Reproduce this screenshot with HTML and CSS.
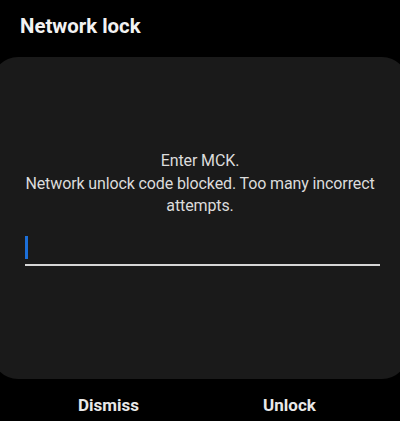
FILE: index.html
```html
<!DOCTYPE html>
<html lang="en">
<head>
<meta charset="utf-8">
<title>Network lock</title>
<link rel="stylesheet" href="styles.css">
</head>
<body>
<div class="screen">
  <header class="header">
    <h1 class="title">Network lock</h1>
  </header>
  <section class="card">
    <p class="message">Enter MCK.<br>Network unlock code blocked. Too many incorrect attempts.</p>
    <div class="field">
      <span class="cursor"></span>
    </div>
  </section>
  <div class="actions">
    <button class="action">Dismiss</button>
    <button class="action">Unlock</button>
  </div>
</div>
</body>
</html>
```

FILE: styles.css
```css
html, body {
  margin: 0;
  padding: 0;
  background: #000;
}
body {
  font-family: Roboto, "Noto Sans", "Liberation Sans", sans-serif;
  overflow: hidden;
}
.screen {
  width: 400px;
  height: 421px;
  overflow: hidden;
  display: flex;
  flex-direction: column;
}
.header {
  height: 57px;
  box-sizing: border-box;
  padding: 14px 0 0 20px;
}
.title {
  margin: 0;
  font-size: 20.4px;
  line-height: 24px;
  font-weight: 700;
  color: #f2f2f2;
}
.card {
  margin: 0 -8px;
  height: 322px;
  box-sizing: border-box;
  background: #1a1a1a;
  border-radius: 26px;
  padding: 93px 28px 0 33px;
}
.message {
  margin: 0 -5px 0 -10px;
  font-size: 16px;
  line-height: 22.5px;
  letter-spacing: -0.12px;
  color: #dcdcdc;
  text-align: center;
}
.field {
  margin-top: 18.5px;
  height: 28px;
  border-bottom: 2px solid #d6d6d6;
  display: flex;
  align-items: flex-start;
}
.cursor {
  width: 3px;
  height: 23px;
  background: #1c6fd8;
}
.actions {
  display: flex;
  padding: 16px 20px 0 18px;
}
.action {
  flex: 1;
  background: none;
  border: 0;
  padding: 0;
  font-family: inherit;
  font-size: 17px;
  line-height: 20px;
  font-weight: 700;
  color: #e8e8e8;
  text-align: center;
}
```
